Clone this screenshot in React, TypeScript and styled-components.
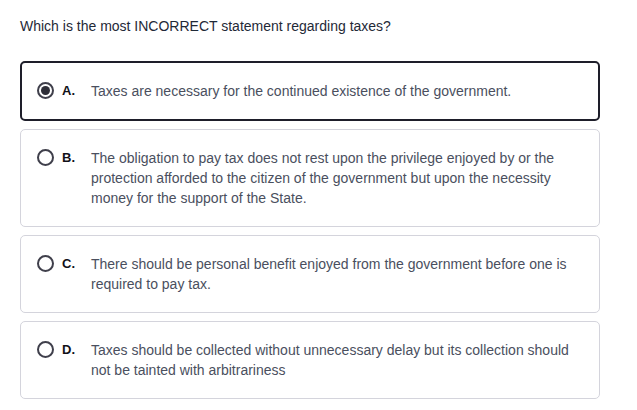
import React from "react";
import styled, { createGlobalStyle } from "styled-components";

const Global = createGlobalStyle`
  html, body { margin: 0; padding: 0; background: #ffffff; }
  body { font-family: Arial, "Liberation Sans", sans-serif; }
`;

const Page = styled.div`
  width: 580px;
  padding: 16px 20px 0 20px;
`;

const Question = styled.div`
  font-size: 14px;
  line-height: 20px;
  color: #1f2937;
  margin-bottom: 25px;
`;

const List = styled.div`
  display: flex;
  flex-direction: column;
  gap: 8px;
`;

const Card = styled.div<{ $selected: boolean }>`
  display: flex;
  align-items: flex-start;
  border: ${(p) => (p.$selected ? "2px solid #1e1e2a" : "1px solid #d4d4dc")};
  border-radius: 5px;
  padding: ${(p) => (p.$selected ? "18px 16px 18px 15px" : "18px 16px 18px 16px")};
  background: #fff;
`;

const Radio = styled.span<{ $selected: boolean }>`
  flex: none;
  box-sizing: border-box;
  width: 17px;
  height: 17px;
  margin: 1px 0 0 0;
  border: 2px solid #3f3f4b;
  border-radius: 50%;
  display: flex;
  align-items: center;
  justify-content: center;
  &::after {
    content: "";
    display: ${(p) => (p.$selected ? "block" : "none")};
    width: 9px;
    height: 9px;
    border-radius: 50%;
    background: #2e2e38;
  }
`;

const Letter = styled.span`
  flex: none;
  width: 29px;
  margin-left: 8px;
  font-size: 13px;
  font-weight: bold;
  line-height: 20px;
  color: #111118;
`;

const Text = styled.span`
  font-size: 14px;
  line-height: 20px;
  color: #4a4f5e;
`;

const options = [
  { key: "A", text: "Taxes are necessary for the continued existence of the government." },
  {
    key: "B",
    text: "The obligation to pay tax does not rest upon the privilege enjoyed by or the protection afforded to the citizen of the government but upon the necessity money for the support of the State.",
  },
  {
    key: "C",
    text: "There should be personal benefit enjoyed from the government before one is required to pay tax.",
  },
  {
    key: "D",
    text: "Taxes should be collected without unnecessary delay but its collection should not be tainted with arbitrariness",
  },
];

export default function App() {
  return (
    <>
      <Global />
      <Page>
        <Question>Which is the most INCORRECT statement regarding taxes?</Question>
        <List>
          {options.map((o) => (
            <Card key={o.key} $selected={o.key === "A"}>
              <Radio $selected={o.key === "A"} />
              <Letter>{o.key}.</Letter>
              <Text>{o.text}</Text>
            </Card>
          ))}
        </List>
      </Page>
    </>
  );
}
